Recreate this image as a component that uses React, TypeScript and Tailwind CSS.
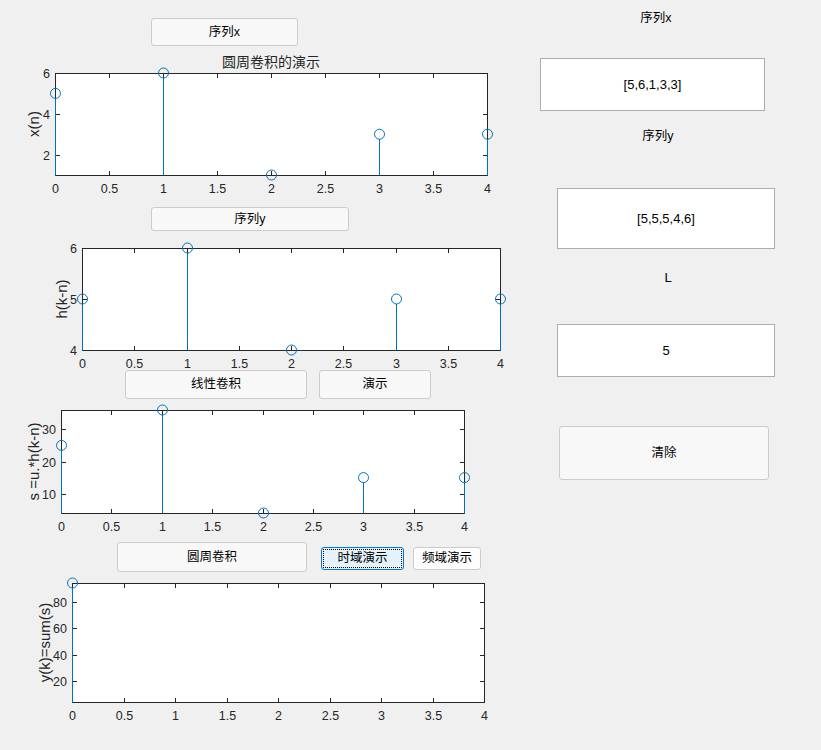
import React from 'react';

const BLUE = '#0072bd';
const AX = '#262626';
const FONT = 'Liberation Sans, Noto Sans CJK SC, sans-serif';

interface PlotProps {
    top: number;
    height: number;
    x0: number;
    x1: number;
    y0: number;
    y1: number;
    ymin: number;
    ymax: number;
    yticks: number[];
    data: number[];
    ylabel: string;
    labelX: number;
    title?: string;
}

const xticks = [0, 0.5, 1, 1.5, 2, 2.5, 3, 3.5, 4];

const Plot: React.FC<PlotProps> = ({ top, height, x0, x1, y0, y1, ymin, ymax, yticks, data, ylabel, labelX, title }) => {
    // page coords -> svg coords
    const Y = (v: number) => v - top;
    const px = (x: number) => x0 + (x / 4) * (x1 - x0);
    const py = (v: number) => y1 - ((v - ymin) / (ymax - ymin)) * (y1 - y0);
    const r = 5;
    const T = 4;

    return (
        <svg width={520} height={height} className="block shrink-0" fontFamily={FONT}>
            {title && (
                <text x={(x0 + x1) / 2} y={Y(62)} textAnchor="middle" dominantBaseline="central" fontSize={14} fill={AX}>
                    {title}
                </text>
            )}
            <rect x={x0 + 0.5} y={Y(y0) + 0.5} width={x1 - x0} height={y1 - y0} fill="#ffffff" stroke={AX} strokeWidth={1} />
            {xticks.map((t) => {
                const x = Math.round(px(t)) + 0.5;
                return (
                    <g key={t}>
                        <line x1={x} x2={x} y1={Y(y1)} y2={Y(y1) - T} stroke={AX} />
                        <line x1={x} x2={x} y1={Y(y0) + 1} y2={Y(y0) + 1 + T} stroke={AX} />
                        <text x={x} y={Y(y1) + 14} textAnchor="middle" dominantBaseline="central" fontSize={12.5} fill={AX}>
                            {t}
                        </text>
                    </g>
                );
            })}
            {yticks.map((t) => {
                const y = Math.round(Y(py(t))) + 0.5;
                return (
                    <g key={t}>
                        <line x1={x0 + 1} x2={x0 + 1 + T} y1={y} y2={y} stroke={AX} />
                        <line x1={x1} x2={x1 - T} y1={y} y2={y} stroke={AX} />
                        <text x={x0 - 5} y={y} textAnchor="end" dominantBaseline="central" fontSize={12.5} fill={AX}>
                            {t}
                        </text>
                    </g>
                );
            })}
            <text
                x={labelX}
                y={Y((y0 + y1) / 2)}
                textAnchor="middle"
                dominantBaseline="central"
                fontSize={15}
                fill={AX}
                transform={`rotate(-90 ${labelX} ${Y((y0 + y1) / 2)})`}
            >
                {ylabel}
            </text>
            {data.map((v, i) => {
                const x = Math.round(px(i)) + 0.5;
                const y = Y(py(v));
                return (
                    <g key={i}>
                        {y + r < Y(y1) && <line x1={x} x2={x} y1={Y(y1) + 0.5} y2={y + r} stroke={BLUE} strokeWidth={1} />}
                        <circle cx={x} cy={y} r={r} fill="none" stroke={BLUE} strokeWidth={1} />
                    </g>
                );
            })}
        </svg>
    );
};

const btn = 'flex items-center justify-center bg-[#f8f8f8] border border-[#cccccc] rounded-[3px] text-[12.5px] text-black shrink-0';
const edit = 'flex items-center justify-center bg-white border border-[#adadad] text-[13px] text-black shrink-0';

export default function App() {
    return (
        <div className="w-[821px] h-[750px] bg-[#f0f0f0] flex overflow-hidden font-['Liberation_Sans','Noto_Sans_CJK_SC',sans-serif]">
            {/* left: buttons and axes */}
            <div className="w-[520px] flex flex-col shrink-0">
                <div className={`${btn} mt-[18px] ml-[151px] w-[147px] h-[28px]`}>序列x</div>
                <Plot top={46} height={161} x0={55} x1={487} y0={73} y1={175} ymin={1} ymax={6} yticks={[2, 4, 6]} data={[5, 6, 1, 3, 3]} ylabel="x(n)" labelX={33} title="圆周卷积的演示" />

                <div className={`${btn} ml-[151px] w-[198px] h-[24px]`}>序列y</div>
                <Plot top={231} height={139} x0={82} x1={500} y0={248} y1={350} ymin={4} ymax={6} yticks={[4, 5, 6]} data={[5, 6, 4, 5, 5]} ylabel="h(k-n)" labelX={61} />

                <div className="flex h-[29px] shrink-0">
                    <div className={`${btn} ml-[125px] w-[182px] h-[29px]`}>线性卷积</div>
                    <div className={`${btn} ml-[12px] w-[112px] h-[29px]`}>演示</div>
                </div>
                <Plot top={399} height={143} x0={61} x1={464} y0={410} y1={513} ymin={4} ymax={36} yticks={[10, 20, 30]} data={[25, 36, 4, 15, 15]} ylabel="s =u.*h(k-n)" labelX={33} />

                <div className="flex items-start h-[30px] shrink-0">
                    <div className={`${btn} ml-[117px] w-[190px] h-[30px]`}>圆周卷积</div>
                    <div className="mt-[5px] ml-[14px] w-[83px] h-[23px] p-[1px] bg-[#e5f1fb] border border-[#0078d7] rounded-[3px] shrink-0">
                        <div className="w-full h-full border border-dotted border-black flex items-center justify-center text-[12.5px] text-black">时域演示</div>
                    </div>
                    <div className={`${btn} mt-[5px] ml-[9px] w-[68px] h-[23px] bg-[#fdfdfd]`}>频域演示</div>
                </div>
                <Plot top={572} height={178} x0={72} x1={484} y0={583} y1={702} ymin={4.4} ymax={94.3} yticks={[20, 40, 60, 80]} data={[94.3]} ylabel="y(k)=sum(s)" labelX={44} />
            </div>

            {/* right: inputs */}
            <div className="flex-1 flex flex-col items-start">
                <div className="mt-[10px] ml-[76px] w-[120px] h-[16px] leading-[16px] text-center text-[12.5px] text-black">序列x</div>
                <div className={`${edit} mt-[32px] ml-[20px] w-[225px] h-[53px]`}>[5,6,1,3,3]</div>

                <div className="mt-[17px] ml-[78px] w-[120px] h-[16px] leading-[16px] text-center text-[12.5px] text-black">序列y</div>
                <div className={`${edit} mt-[44px] ml-[37px] w-[218px] h-[61px]`}>[5,5,5,4,6]</div>

                <div className="mt-[21px] ml-[88px] w-[120px] h-[16px] leading-[16px] text-center text-[13px] text-black">L</div>
                <div className={`${edit} mt-[38px] ml-[37px] w-[218px] h-[53px]`}>5</div>

                <div className={`${btn} mt-[49px] ml-[39px] w-[210px] h-[54px]`}>清除</div>
            </div>
        </div>
    );
}
